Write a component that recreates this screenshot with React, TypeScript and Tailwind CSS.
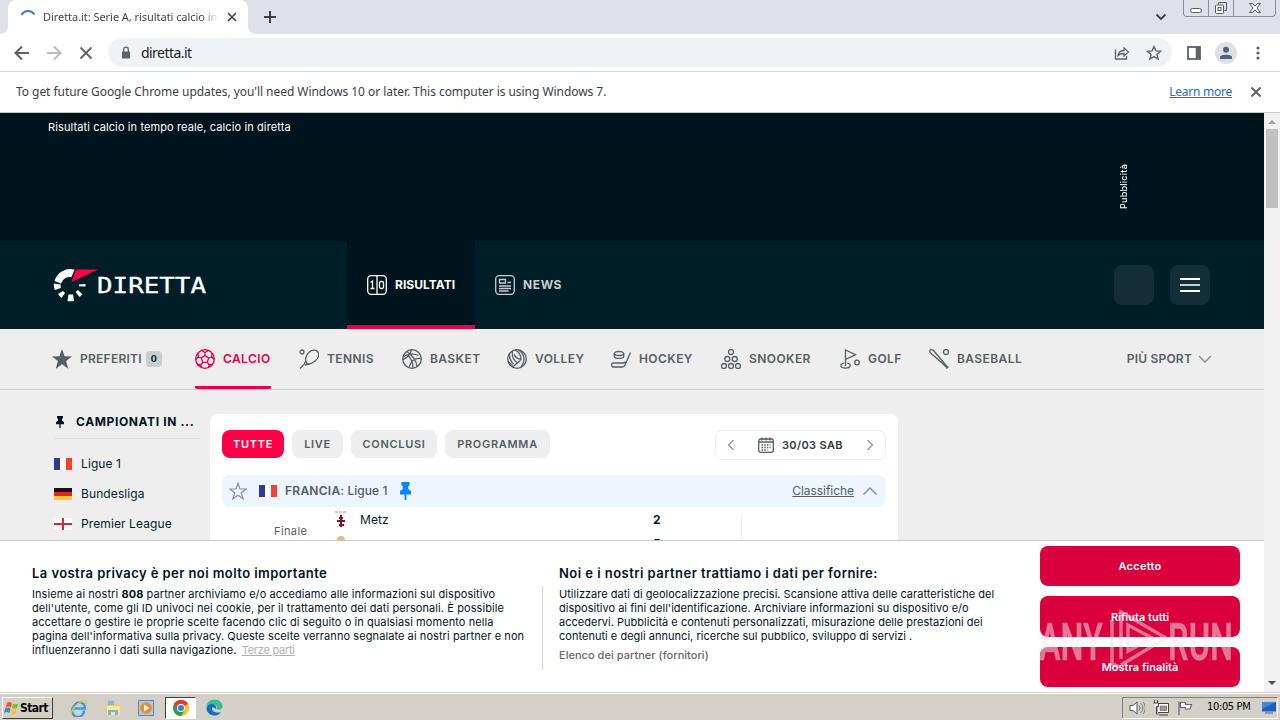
import type { ReactNode } from 'react';
import clsx from 'clsx';

const SPORTS = [
  { name: 'CALCIO', icon: <SoccerIcon />, width: 'w-[104px]', active: true },
  { name: 'TENNIS', icon: <TennisIcon />, width: 'w-[103px]' },
  { name: 'BASKET', icon: <BasketIcon />, width: 'w-[105px]' },
  { name: 'VOLLEY', icon: <VolleyIcon />, width: 'w-[104px]' },
  { name: 'HOCKEY', icon: <HockeyIcon />, width: 'w-[110px]' },
  { name: 'SNOOKER', icon: <SnookerIcon />, width: 'w-[119px]' },
  { name: 'GOLF', icon: <GolfIcon />, width: 'w-[89px]' },
  { name: 'BASEBALL', icon: <BaseballIcon />, width: 'w-[190px]' },
];

const FILTERS = [
  { name: 'TUTTE', width: 'w-[62px]', active: true },
  { name: 'LIVE', width: 'w-[51px]' },
  { name: 'CONCLUSI', width: 'w-[86px]' },
  { name: 'PROGRAMMA', width: 'w-[105px]' },
];

export default function App() {
  return (
    <div className="flex h-[720px] w-[1280px] flex-col overflow-hidden bg-white font-['Inter',sans-serif] whitespace-nowrap">
      <TabStrip />
      <Toolbar />
      <InfoBar />
      <div className="flex h-[579px] shrink-0">
        <div className="relative flex w-[1264px] flex-col overflow-hidden bg-[#eeeeee]">
          <AdArea />
          <Header />
          <SportNav />
          <div className="flex pt-6">
            <Sidebar />
            <Matches />
          </div>
          <CookieBanner />
        </div>
        <ScrollBar />
      </div>
      <TaskBar />
    </div>
  );
}

function Icon({ size = 20, children, className }: { size?: number; children: ReactNode; className?: string }) {
  return (
    <svg
      width={size}
      height={size}
      viewBox={`0 0 ${size} ${size}`}
      fill="none"
      stroke="currentColor"
      strokeWidth="1.3"
      className={clsx('shrink-0', className)}
    >
      {children}
    </svg>
  );
}

/* ---------- browser window ---------- */

function TabStrip() {
  return (
    <div className="flex h-[34px] shrink-0 items-start bg-[#dee1e9] font-['Noto_Sans',sans-serif]">
      <div className="flex h-[34px] w-2 items-end bg-white">
        <div className="h-[34px] w-2 rounded-br-lg bg-[#dee1e9]" />
      </div>
      <div className="flex h-[34px] w-60 items-center rounded-t-lg bg-white pl-3">
        <Icon size={16} className="text-[#3c78c8]">
          <path d="M1.5 6C4.5 .8 11 .8 14.5 5.5" strokeWidth="2" />
        </Icon>
        <span className="ml-[7px] w-[176px] overflow-hidden bg-linear-to-r from-[#3c4043] from-90% to-transparent bg-clip-text text-[11px] tracking-[-0.050px] text-transparent">
          Diretta.it: Serie A, risultati calcio in tempo
        </span>
        <Icon size={12} className="ml-[7px] text-[#3c4043]">
          <path d="M2 2l8 8M10 2l-8 8" strokeWidth="1.6" />
        </Icon>
      </div>
      <div className="flex h-[34px] w-2 items-end bg-white">
        <div className="h-[34px] w-2 rounded-bl-lg bg-[#dee1e9]" />
      </div>
      <Icon size={14} className="mt-[10px] ml-[7px] text-[#3c4043]">
        <path d="M7 1v12M1 7h12" strokeWidth="2" />
      </Icon>
      <Icon size={12} className="mt-[11px] ml-[878px] text-[#3c4043]">
        <path d="M1.500 3.500L6 8l4.500-4.500" strokeWidth="1.800" />
      </Icon>
      <div className="ml-4 flex h-[17px] w-[93px] rounded-b-[4px] border border-t-0 border-[#8a8e96] text-[#555a63]">
        <div className="flex w-[25px] items-end justify-center border-r border-[#8a8e96] pb-[3px]">
          <div className="h-[5px] w-3 rounded-sm border border-[#555a63] bg-white" />
        </div>
        <div className="flex w-[25px] items-center justify-center border-r border-[#8a8e96]">
          <Icon size={14}>
            <path d="M4.500 3.500v-2h8v8h-2" strokeWidth="1" />
            <rect x="1.500" y="4" width="8" height="8.500" rx="1" strokeWidth="1" fill="#fff" />
            <rect x="4" y="6.500" width="3" height="3" strokeWidth="1" />
          </Icon>
        </div>
        <div className="flex w-[41px] items-center justify-center">
          <Icon size={14}>
            <path
              d="M1.500 2.500h3L7 5l2.500-2.500h3L9 7l3.500 4.500h-3L7 9l-2.500 2.500h-3L5 7z"
              strokeWidth="1"
              fill="#fff"
            />
          </Icon>
        </div>
      </div>
    </div>
  );
}

function Toolbar() {
  return (
    <div className="flex h-[38px] shrink-0 items-center border-b border-[#d5d7da] pl-[14px] font-['Noto_Sans',sans-serif] text-[#5f6368]">
      <Icon size={16}>
        <path d="M15 8H2M8 1.500L1.500 8 8 14.500" strokeWidth="2" />
      </Icon>
      <Icon size={16} className="ml-4 text-[#b9bbbe]">
        <path d="M1 8h13M8 1.500L14.500 8 8 14.500" strokeWidth="2" />
      </Icon>
      <Icon size={16} className="ml-4">
        <path d="M2.500 2.500l11 11M13.500 2.500l-11 11" strokeWidth="1.800" />
      </Icon>
      <div className="ml-[14px] flex h-[29px] w-[1064px] items-center rounded-full bg-[#f0f3f6] pl-[13px]">
        <Icon size={10} className="h-[14px]">
          <rect x="1" y="3.500" width="8" height="7" fill="currentColor" stroke="none" />
          <path d="M2.700 4V1.500a2.300 2.300 0 014.600 0V4" />
        </Icon>
        <span className="ml-[10px] text-[14px] tracking-[-0.550px] text-[#202124]">diretta.it</span>
        <Icon size={16} className="ml-auto">
          <path d="M1.500 4.500v9.500h11v-3" />
          <path d="M4 10.500c.5-3.500 3-5 6-5V3l4.500 4-4.500 4V8.500c-3 0-4.500.3-6 2z" />
        </Icon>
        <Icon size={16} className="mr-[10px] ml-4">
          <path
            d="M8 1.500l1.900 4.400 4.700.4-3.600 3.100 1.100 4.700L8 11.600l-4.100 2.500L5 9.400 1.400 6.300l4.700-.4z"
            strokeWidth="1.400"
          />
        </Icon>
      </div>
      <Icon size={14} className="ml-[15px]">
        <rect x="1" y="1" width="12" height="12" strokeWidth="1.800" />
        <path d="M11 1v12" strokeWidth="4.500" />
      </Icon>
      <div className="ml-[14px] flex size-[22px] items-center justify-center rounded-full bg-[#dde1e7] text-[#55607a]">
        <Icon size={14}>
          <circle cx="7" cy="3.800" r="3" fill="currentColor" stroke="none" />
          <path d="M1 13v-2c0-3 12-3 12 0v2z" fill="currentColor" stroke="none" />
        </Icon>
      </div>
      <Icon size={14} className="ml-[14px]">
        <g fill="currentColor" stroke="none">
          <circle cx="7" cy="2" r="1.600" />
          <circle cx="7" cy="7" r="1.600" />
          <circle cx="7" cy="12" r="1.600" />
        </g>
      </Icon>
    </div>
  );
}

function InfoBar() {
  return (
    <div className="flex h-[41px] shrink-0 items-center border-b border-[#c8cacc] pr-[18px] pl-4 font-['Noto_Sans',sans-serif] text-[12px] text-[#3c4043]">
      <span className="tracking-[-0.050px]">
        To get future Google Chrome updates, you'll need Windows 10 or later. This computer is using Windows 7.
      </span>
      <span className="ml-auto tracking-[-0.250px] text-[#1a6fd0] underline">Learn more</span>
      <Icon size={12} className="ml-[18px] text-[#5f6368]">
        <path d="M1.500 1.500l9 9M10.500 1.500l-9 9" strokeWidth="2" />
      </Icon>
    </div>
  );
}

function ScrollBar() {
  return (
    <div className="flex w-4 flex-col items-center bg-[#f1f1f1]">
      <svg width="8" height="4" className="mt-[7px]">
        <path d="M4 0l4 4H0z" fill="#a3a3a3" />
      </svg>
      <div className="mt-[5px] h-[79px] w-3 bg-[#c1c1c1]" />
      <svg width="8" height="4" className="mt-auto mb-[7px]">
        <path d="M0 0h8L4 4z" fill="#505050" />
      </svg>
    </div>
  );
}

/* ---------- site ---------- */

function AdArea() {
  return (
    <div className="flex h-32 shrink-0 items-start bg-[#00141e] pl-12 text-white">
      <h2 className="mt-[7px] w-[1070px] text-[11px] leading-[14px] tracking-[0.110px]">
        Risultati calcio in tempo reale, calcio in diretta
      </h2>
      <span className="mt-[51px] rotate-180 text-[9px] leading-3 font-medium tracking-[0.250px] [writing-mode:vertical-rl]">
        Pubblicità
      </span>
    </div>
  );
}

function Header() {
  return (
    <div className="flex h-[88px] shrink-0 items-center bg-[#001e28] pr-[54px]">
      <Logo />
      <div className="ml-[138px] flex h-full w-32 items-center border-b-4 border-[#e60046] bg-[#00141e] pt-1 pl-5 text-white">
        <Icon>
          <rect x=".7" y=".7" width="18.600" height="18.600" rx="3.500" />
          <path d="M10 1v18M3.500 7.500l2-1.500v7.500M3.500 13.500h4" />
          <rect x="12.500" y="6.500" width="4" height="7" rx="1.500" />
        </Icon>
        <span className="ml-2 text-[12px] font-bold tracking-[0.050px]">RISULTATI</span>
      </div>
      <div className="flex items-center pl-5 text-[#c8cdcd]">
        <Icon>
          <rect x=".7" y=".7" width="18.600" height="18.600" rx="3.500" />
          <path d="M4.500 4.500h6v3.500h-6zM12.500 7.500H16M4 11h12M4 13.500h12M4 16h9.500" />
        </Icon>
        <span className="ml-2 text-[12px] font-bold tracking-[0.600px]">NEWS</span>
      </div>
      <div className="ml-auto size-10 rounded-lg bg-[#132e37]" />
      <div className="ml-4 flex size-10 flex-col items-center justify-center gap-1 rounded-lg bg-[#132e37]">
        <div className="h-[2px] w-5 bg-white" />
        <div className="h-[2px] w-5 bg-[#c8cdcd]" />
        <div className="h-[2px] w-5 bg-white" />
      </div>
    </div>
  );
}

function Logo() {
  return (
    <svg width="156" height="36" viewBox="0 0 156 36" className="ml-[53px] shrink-0">
      <path d="M21.500 2.500A16.500 16.500 0 001.500 14l6.500 2.500a9.500 9.500 0 0110.500-6.500z" fill="#fff" />
      <g fill="#fff">
        <path d="M.8 16.500l6.700 1 .3 3.500-6 2A15 15 0 01.800 16.500z" />
        <path d="M5 27l5-3 2 2-3.500 5A16 16 0 015 27z" />
        <path d="M15.500 27.500h4.500l1 6.500a16 16 0 01-6.500 0z" />
        <path d="M22.500 25l2.500-2 4.500 4.500-3 2.500z" />
        <path d="M26 17.500l6.500-.5v2.500l-6.500-.3z" />
      </g>
      <path d="M23 2.500h22L18.500 15z" fill="#ff0046" />
      <text
        x="44"
        y="25.700"
        fill="#fff"
        stroke="#fff"
        strokeWidth=".3"
        fontSize="21.500"
        textLength="109"
        lengthAdjust="spacingAndGlyphs"
        className="font-['DejaVu_Sans_Mono',monospace]"
      >
        DIRETTA
      </text>
    </svg>
  );
}

function SportNav() {
  return (
    <div className="flex h-[61px] shrink-0 border-b border-[#c8cdcd] pl-[52px] text-[12px] font-semibold tracking-[0.420px] text-[#555e61]">
      <div className="flex w-[143px] items-center">
        <Icon>
          <path
            d="M10 0l2.600 7.300 7.400.2-5.900 4.600 2.100 7.600L10 15.300l-6.200 4.400 2.100-7.600L0 7.500l7.400-.2z"
            fill="currentColor"
            stroke="none"
          />
        </Icon>
        <span className="ml-2 tracking-[0.250px]">PREFERITI</span>
        <span className="ml-[4px] flex h-4 w-4 items-center justify-center rounded bg-[#c8cdcd] text-[9px] font-bold tracking-normal text-[#001e28]">
          0
        </span>
      </div>
      {SPORTS.map((sport) => (
        <div key={sport.name} className={clsx('flex', sport.width)}>
          <div
            className={clsx(
              'flex h-[60px] items-center gap-2',
              sport.active && 'rounded-b-xs border-b-3 border-[#e60046] pt-[3px] text-[#e60046]',
            )}
          >
            {sport.icon}
            <span>{sport.name}</span>
          </div>
        </div>
      ))}
      <div className="ml-auto flex items-center pr-[52px] tracking-[0.200px]">
        PIÙ SPORT
        <Icon size={14} className="ml-[6px] text-[#858c8e]">
          <path d="M1 4l6 6 6-6" />
        </Icon>
      </div>
    </div>
  );
}

function SoccerIcon() {
  return (
    <Icon>
      <circle cx="10" cy="10" r="9.300" />
      <path d="M10 6.300l3.700 2.700-1.400 4.300H7.700L6.300 9zM10 6.300V3.500M13.700 9l3-1M12.300 13.300l2 2.700M7.700 13.300l-2 2.700M6.300 9l-3-1M6.500 1.500L10 3.500l3.500-2M16.700 8l.3-4M16.700 8l2.600 2.500M14.300 16l3.500-.5M14.300 16L13 18.800M5.700 16l-3.500-.5M5.700 16L7 18.800M3.300 8L3 4M3.300 8L.7 10.500" />
    </Icon>
  );
}

function TennisIcon() {
  return (
    <Icon>
      <circle cx="3" cy="3" r="2" />
      <path d="M8 14.500C5.500 11.500 6.500 6 10 3.200s7.500-2.500 9 0 .5 6.300-3.200 9S9.500 15.200 8 14.500zM8 14.500c-1-1-1.300-2-1.400-3.500M8 14.500c1 .4 2.200.6 3.500.3M6.800 11.500L5.500 15 1 19.500M10.500 15L6 16" />
    </Icon>
  );
}

function BasketIcon() {
  return (
    <Icon>
      <circle cx="10" cy="10" r="9.300" />
      <path d="M1 8c4-3 11-4 15.500-1.500M5 2.500C11 7 14.500 12 15 17.500M9.500.7c-1 5-3.500 8-8.500 10M19 9.500c-6-1-10 2-12 9M6.500 7c3 3 4.500 7 4.500 12.300" />
    </Icon>
  );
}

function VolleyIcon() {
  return (
    <Icon>
      <circle cx="10" cy="10" r="9.300" />
      <path d="M8 .9c4 2 6 5 6 9.500-2 3-5 5-8.500 7.500M11.500 1c3 2 5.500 5 5.500 9.500 0 2.500-1 5-3 7.500M14 10.400c-3-.3-5.500-2-7-5M5.500 2c-1 5 1 9 4.500 11.500M2.500 4.500c-.5 4 1 7.500 4 10.500M1 12c1.500 2 3 3.500 4.500 4.500" />
    </Icon>
  );
}

function HockeyIcon() {
  return (
    <Icon>
      <ellipse cx="8" cy="4.500" rx="4.700" ry="2" />
      <path d="M3.300 4.500v3c0 2.600 9.400 2.600 9.400 0v-3M19.500 3.500L14 16c-.5 1.300-1 2-2.500 2H2.500C1 18 .7 17 .7 15.500S1.500 14 2.500 14H12c1.500 0 2-.5 2.500-1.500" />
    </Icon>
  );
}

function SnookerIcon() {
  return (
    <Icon>
      <circle cx="10" cy="3" r="2.500" />
      <circle cx="6.300" cy="10" r="2.500" />
      <circle cx="13.700" cy="10" r="2.500" />
      <circle cx="3" cy="17" r="2.500" />
      <circle cx="10" cy="17" r="2.500" />
      <circle cx="17" cy="17" r="2.500" />
    </Icon>
  );
}

function GolfIcon() {
  return (
    <Icon>
      <path d="M5.500 17V1l10 4.700-10 4.800M4 14.200c-4.500.7-4.300 5 1.500 5s6-4.300 1.700-5" />
      <circle cx="17" cy="13.500" r="2.300" />
    </Icon>
  );
}

function BaseballIcon() {
  return (
    <Icon>
      <path d="M1 1.300C2 .2 3.500.5 4.700 1.800L13 11.500l5.500 6.700M1 1.300c-.6 1 .2 2.500 1.400 3.500l9.300 8 6.300 5.900M17.300 19.500l2.200-2" />
      <circle cx="17" cy="3" r="2.500" />
    </Icon>
  );
}

function Pin({ width, height, className }: { width: number; height: number; className?: string }) {
  return (
    <svg width={width} height={height} viewBox="0 0 12 18" preserveAspectRatio="none" className={className}>
      <path d="M1.500 0h9v3L9 4.500V7l3 2v3.500H7V18H5v-5.500H0V9l3-2V4.500L1.500 3z" fill="currentColor" />
    </svg>
  );
}

function FlagFrance() {
  return (
    <div className="flex h-3 w-[18px] shrink-0">
      <div className="w-1.5 bg-[#2f3b94]" />
      <div className="w-1.5 bg-white" />
      <div className="w-1.5 bg-[#ee4436]" />
    </div>
  );
}

function FlagGermany() {
  return (
    <div className="flex h-3 w-[18px] shrink-0 flex-col">
      <div className="h-1 bg-[#151515]" />
      <div className="h-1 bg-[#dc2a1c]" />
      <div className="h-1 bg-[#fcc53c]" />
    </div>
  );
}

function FlagEngland() {
  return (
    <svg width="18" height="12" className="shrink-0">
      <path d="M0 0h18v12H0z" fill="#fff" />
      <path d="M9 0v12M0 6h18" stroke="#d8263a" strokeWidth="2" />
    </svg>
  );
}

function Sidebar() {
  return (
    <div className="w-[210px] pl-[54px] text-[12px] text-[#001e28]">
      <div className="mr-[10px] flex h-[25px] items-start border-b border-[#dcdfdf] pl-[2px] text-[#00141e]">
        <Pin width={8} height={12} className="mt-[2px]" />
        <span className="ml-3 leading-4 font-bold tracking-[0.620px]">CAMPIONATI IN ...</span>
      </div>
      <div className="flex flex-col pt-[10px] tracking-[0.100px]">
        <div className="flex h-[30px] items-center gap-[9px]">
          <FlagFrance />
          <span>Ligue 1</span>
        </div>
        <div className="flex h-[30px] items-center gap-[9px]">
          <FlagGermany />
          <span>Bundesliga</span>
        </div>
        <div className="flex h-[30px] items-center gap-[9px]">
          <FlagEngland />
          <span>Premier League</span>
        </div>
      </div>
    </div>
  );
}

function Matches() {
  return (
    <div className="h-[300px] w-[688px] rounded-lg bg-white px-3 pt-4 text-[#555e61]">
      <div className="flex h-7 items-center gap-2">
        {FILTERS.map((filter) => (
          <div
            key={filter.name}
            className={clsx(
              'flex h-7 items-center justify-center rounded-lg text-[11px] font-semibold tracking-[0.700px]',
              filter.width,
              filter.active ? 'bg-[#ff0046] text-white' : 'bg-[#eeeeee]',
            )}
          >
            {filter.name}
          </div>
        ))}
        <div className="mt-[2px] ml-auto flex h-[30px] w-[171px] items-center rounded-lg border border-[#eeeeee] pl-[10px]">
          <Icon size={10} className="text-[#858c8e]">
            <path d="M7.500 0L2.500 5l5 5" strokeWidth="1.100" />
          </Icon>
          <Icon size={16} className="ml-[22px]">
            <rect x=".700" y="2" width="14.600" height="13.300" rx="2" />
            <path d="M1 5h14M4 .5v3M8 .5v3M12 .5v3" />
            <path d="M3.500 8h9M3.500 10.500h9M3.500 13h6" strokeDasharray="1.500 1.200" />
          </Icon>
          <span className="ml-2 text-[11px] font-semibold tracking-[0.350px] text-[#333b3e]">30/03 SAB</span>
          <Icon size={10} className="mr-[10px] ml-auto text-[#858c8e]">
            <path d="M2.500 0l5 5-5 5" strokeWidth="1.100" />
          </Icon>
        </div>
      </div>
      <div className="mt-[17px] flex h-8 items-center rounded-lg bg-[#edf5ff] pr-2 pl-[7px] text-[12px]">
        <Icon size={18} className="text-[#8d9498]">
          <path d="M9 1l2 5.900 6.200.1-5 3.800 1.900 6L9 13.200l-5.100 3.600 1.900-6L.8 7 7 6.900z" strokeWidth="1.200" />
        </Icon>
        <div className="ml-3">
          <FlagFrance />
        </div>
        <span className="ml-2 font-semibold tracking-[0.250px]">FRANCIA:</span>
        <span className="ml-[3px] font-medium tracking-[0.050px]">Ligue 1</span>
        <Pin width={11} height={18} className="ml-3 text-[#0787fa]" />
        <span className="ml-auto tracking-[-0.050px] underline">Classifiche</span>
        <Icon size={16} className="ml-2 text-[#858c8e]">
          <path d="M1.500 11.500L8 5l6.500 6.500" />
        </Icon>
      </div>
      <div className="flex text-[12px] text-[#001e28]">
        <span className="w-[113px] pt-[16px] pl-[52px] text-[11px] tracking-[0.400px] text-[#555e61]">Finale</span>
        <div className="w-[25px]">
          <svg width="12" height="40" className="mt-1">
            <path d="M0 1h12" stroke="#b9868c" strokeDasharray="3 1" />
            <path d="M6 4v12M2 10h8M4 7h4M4 14h5" stroke="#7b1626" strokeWidth="2" />
            <circle cx="6" cy="29" r="4" fill="#d6c08a" />
          </svg>
        </div>
        <div className="flex w-[293px] flex-col pt-[5px] leading-4">
          <span className="tracking-[0.050px]">Metz</span>
        </div>
        <div className="flex w-[88px] flex-col gap-2 pt-[5px] leading-4 font-bold">
          <span>2</span>
          <span>5</span>
        </div>
        <div className="mt-[9px] h-16 border-l border-[#eeeeee]" />
      </div>
    </div>
  );
}

function CookieBanner() {
  return (
    <div className="absolute bottom-0 left-0 flex h-[152px] w-[1264px] border-t border-[#c8c8c8] bg-white pl-8 text-[11px] leading-[14px] text-[#00141e]">
      <div className="mt-[23px] w-[510px]">
        <h3 className="mb-[5px] text-[13px] leading-[18px] font-semibold tracking-[0.430px]">
          La vostra privacy è per noi molto importante
        </h3>
        <p className="tracking-[0.080px]">
          Insieme ai nostri <b>808</b> partner archiviamo e/o accediamo alle informazioni sul dispositivo
          <br />
          dell'utente, come gli ID univoci nei cookie, per il trattamento dei dati personali. È possibile
          <br />
          accettare o gestire le proprie scelte facendo clic di seguito o in qualsiasi momento nella
          <br />
          pagina dell'informativa sulla privacy. Queste scelte verranno segnalate ai nostri partner e non
          <br />
          influenzeranno i dati sulla navigazione.{' '}
          <span className="ml-[2px] tracking-[-0.250px] text-[#b0b0b0] underline">Terze parti</span>
        </p>
      </div>
      <div className="mt-[45px] h-[84px] border-l border-[#d8d8d8]" />
      <div className="mt-[23px] ml-4 w-[481px]">
        <h3 className="mb-[5px] text-[13px] leading-[18px] font-semibold tracking-[0.460px]">
          Noi e i nostri partner trattiamo i dati per fornire:
        </h3>
        <p className="tracking-[0.020px]">
          Utilizzare dati di geolocalizzazione precisi. Scansione attiva delle caratteristiche del
          <br />
          dispositivo ai fini dell'identificazione. Archiviare informazioni su dispositivo e/o
          <br />
          accedervi. Pubblicità e contenuti personalizzati, misurazione delle prestazioni dei
          <br />
          contenuti e degli annunci, ricerche sul pubblico, sviluppo di servizi .
        </p>
        <p className="mt-[5px] font-medium tracking-[0.030px] text-[#696969]">Elenco dei partner (fornitori)</p>
      </div>
      <div className="relative mt-[5px] flex w-[200px] flex-col gap-[10px] font-semibold tracking-[0.020px] text-white">
        <button className="h-10 shrink-0 rounded-lg bg-[#d9003d] tracking-[0.250px]">Accetto</button>
        <button className="h-[41px] shrink-0 rounded-lg bg-[#d9003d]">Rifiuta tutti</button>
        <button className="h-10 shrink-0 rounded-lg bg-[#d9003d]">Mostra finalità</button>
        <Watermark />
      </div>
    </div>
  );
}

function Watermark() {
  return (
    <svg width="204" height="72" viewBox="0 0 204 72" className="absolute top-[60px] -left-[2px] opacity-50">
      <g fill="#f4f0f1" fontSize="52" fontFamily="Roboto" stroke="#cfcfcf" strokeWidth=".3">
        <text x="1" y="53.500" textLength="64" lengthAdjust="spacingAndGlyphs">
          ANY
        </text>
        <text x="130" y="53.500" textLength="65" lengthAdjust="spacingAndGlyphs">
          RUN
        </text>
      </g>
      <g fill="none" stroke="#ece4e6" strokeWidth="3.500">
        <path d="M83 53V6l45 26-45 27" />
        <path d="M74 14v44l8 3M90 19l24 13-24 13z" />
      </g>
    </svg>
  );
}

/* ---------- taskbar ---------- */

function TaskBar() {
  return (
    <div className="flex h-7 shrink-0 items-center border-t border-[#d4d0c8] bg-[#d4d0c8] pt-[2px] pr-[2px] pl-[2px] font-['DejaVu_Sans_Condensed','DejaVu_Sans',sans-serif] shadow-[inset_0_1px_0_#fff]">
      <div className="flex h-[22px] w-[51px] items-center border border-t-white border-r-[#404040] border-b-[#404040] border-l-white pl-px text-[12px] font-bold tracking-[-0.600px] text-black">
        <svg width="15" height="14" className="mr-px shrink-0">
          <path d="M3 2c2-1.500 3-1.300 5 0L7 6.500c-2-1.200-3-1.200-5.500 0z" fill="#ee5a24" />
          <path d="M9 2.500c2 1.200 3 1 5.500 0L13 7c-2 1-3 1-5 0z" fill="#7fba3c" />
          <path d="M1.300 7.500c2-1.200 3-1.200 5.200 0L5.500 12c-2-1.200-3-1.200-5.500 0z" fill="#3a86d8" />
          <path d="M7.700 8c2 1.200 3 1 5 0l-1.200 4.700c-2 1-3 1-5 0z" fill="#f9c22e" />
        </svg>
        Start
      </div>
      <svg width="18" height="18" viewBox="0 0 18 18" fill="none" className="ml-[17px]">
        <path
          d="M14 11.500A6 6 0 113.500 8M3.500 9.500H15C15 5.500 12.500 3.500 9.500 3.500S3.500 6 3.500 9.500z"
          stroke="#37a0e0"
          strokeWidth="2.500"
        />
        <path d="M2 16C-.5 14 5 5 13 2c4-1.300 4 1 3 3" stroke="#f3c13a" strokeWidth="1.300" />
      </svg>
      <svg width="18" height="18" viewBox="0 0 18 18" className="ml-4">
        <path d="M2 3h5l1 2h7v11H2z" fill="#f0cf6b" />
        <path d="M4 1.500h6V6H4z" fill="#83b8df" />
        <path d="M3 7h13v9H3z" fill="#f8e6a0" />
        <path d="M4 16v-5h10v5h-3v-3H7v3z" fill="#78b4dc" />
      </svg>
      <svg width="16" height="16" viewBox="0 0 16 16" className="ml-4">
        <path d="M.5.5h15v15H.5z" fill="#a9cbe9" stroke="#568cbd" />
        <circle cx="8" cy="8" r="5.800" fill="#f28a1c" />
        <path d="M6 4.500L11.500 8 6 11.500z" fill="#fff" />
      </svg>
      <div className="ml-[11px] flex h-[22px] w-[31px] items-center justify-center border border-t-[#404040] border-r-white border-b-white border-l-[#404040] bg-white">
        <svg width="16" height="16" viewBox="0 0 16 16">
          <circle cx="8" cy="8" r="8" fill="#fbc116" />
          <path d="M8 8L1.100 4A8 8 0 0114.900 4z" fill="#e33b2e" />
          <path d="M8 8L1.100 4A8 8 0 008 16l4-6z" fill="#2b9f4b" />
          <path d="M8 4h6.900A8 8 0 001.100 4L5 9z" fill="#e33b2e" />
          <circle cx="8" cy="8" r="4" fill="#fff" />
          <circle cx="8" cy="8" r="3" fill="#3b78e7" />
        </svg>
      </div>
      <svg width="17" height="17" viewBox="0 0 17 17" className="ml-[10px]">
        <path
          d="M.5 9C0 3.500 4 .5 8.500.5S17 4 16.500 8c-.3 2.500-4.500 3.500-6 2 1.500-3-1-5-4-4.500C3.500 6 1.500 7.500.500 9z"
          fill="#36c08b"
        />
        <path
          d="M.5 9c1.500-4.500 6.500-5 8.500-3 1 1 1.500 2.500 1 4-1.500-1-2.500-2-4-1-.5 3.500 4 5.500 9 4-3 4.500-8 4-10.500 2.500S.3 11.500.500 9z"
          fill="#176bc4"
        />
      </svg>
      <div className="ml-auto flex h-[22px] w-[156px] items-center border border-t-[#808080] border-r-white border-b-white border-l-[#808080] pl-[6px] text-[11px] text-black">
        <Icon size={16} className="text-[#555]">
          <path d="M1 5.500h3L8 2v12l-4-3.500H1z" fill="#fff" strokeWidth="1" />
          <path
            d="M10 5.500c1.200 1.500 1.200 3.500 0 5M12 3.500c2.500 2.500 2.500 6.500 0 9M14 2c3 3.500 3 8.500 0 12"
            strokeWidth="1"
            stroke="#777"
          />
        </Icon>
        <Icon size={16} className="ml-2 text-[#444]">
          <path d="M4 3.500h11.500v9H4z" fill="#fff" strokeWidth="1" />
          <path d="M7 6h6.500v4.500H7z" fill="#999" strokeWidth=".5" />
          <path d="M6 15h9M1.500 0v3M4.500 0v3M.5 3h5v3.500h-2V14h2" fill="#eee" strokeWidth="1" />
        </Icon>
        <Icon size={16} className="ml-2 text-[#666]">
          <path d="M2 15V1.500M3.500 2.500h5v2h6L13 9H8.500V7.500h-5z" fill="#fff" strokeWidth="1.200" />
        </Icon>
        <span className="ml-[14px] tracking-[-0.350px]">10:05 PM</span>
        <svg width="16" height="14" viewBox="0 0 16 14" className="ml-auto">
          <path d="M1 1h14v9.500H1z" fill="#1f5fc0" />
          <path d="M1 1h14L1 8z" fill="#3f86dd" />
          <path d="M4 12h8" stroke="#7f97b8" strokeWidth="2" />
        </svg>
      </div>
    </div>
  );
}
